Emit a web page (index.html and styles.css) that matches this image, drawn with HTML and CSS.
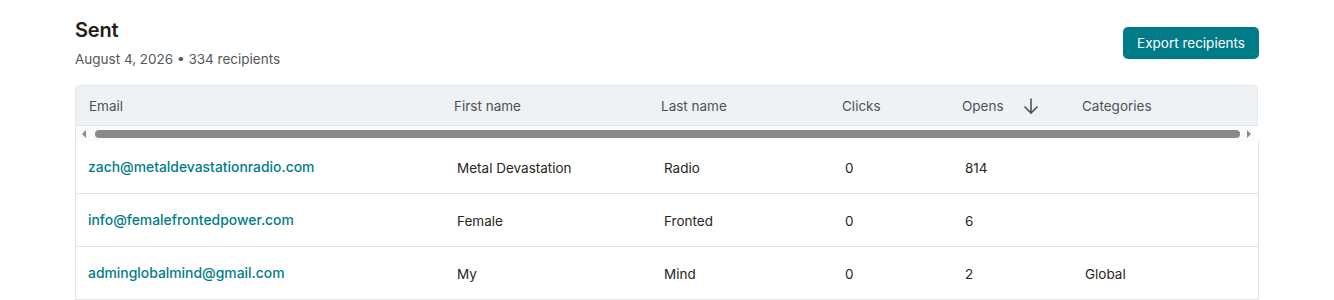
FILE: index.html
```html
<!DOCTYPE html>
<html>
<head>
<meta charset="utf-8">
<link rel="stylesheet" href="styles.css">
</head>
<body>
<div class="page">
  <div class="top">
    <div class="titles">
      <h1 class="title">Sent</h1>
      <div class="sub">August 4, 2026 • 334 recipients</div>
    </div>
    <button class="btn">Export recipients</button>
  </div>
  <div class="card">
    <div class="head row-grid">
      <div class="hc">Email</div>
      <div class="hc">First name</div>
      <div class="hc">Last name</div>
      <div class="hc">Clicks</div>
      <div class="hc opens">Opens
        <svg class="arrow" width="20" height="20" viewBox="0 0 20 20"><path d="M10 2.5V17M3.5 10.5L10 17l6.5-6.5" fill="none" stroke="#4d5358" stroke-width="1.6"/></svg>
      </div>
      <div class="hc">Categories</div>
    </div>
    <div class="scrollbar">
      <span class="tri left"></span>
      <div class="thumb"></div>
      <span class="tri right"></span>
    </div>
    <div class="body">
      <div class="row row-grid">
        <div class="c email">zach@metaldevastationradio.com</div>
        <div class="c">Metal Devastation</div>
        <div class="c">Radio</div>
        <div class="c">0</div>
        <div class="c">814</div>
        <div class="c"></div>
      </div>
      <div class="row row-grid">
        <div class="c email">info@femalefrontedpower.com</div>
        <div class="c">Female</div>
        <div class="c">Fronted</div>
        <div class="c">0</div>
        <div class="c">6</div>
        <div class="c"></div>
      </div>
      <div class="row row-grid">
        <div class="c email">adminglobalmind@gmail.com</div>
        <div class="c">My</div>
        <div class="c">Mind</div>
        <div class="c">0</div>
        <div class="c">2</div>
        <div class="c">Global</div>
      </div>
    </div>
  </div>
</div>
</body>
</html>
```

FILE: styles.css
```css
* { box-sizing: border-box; }
html, body { margin: 0; padding: 0; background: #fff; }
body {
  font-family: Inter, "Noto Sans", "Liberation Sans", sans-serif;
  color: #241c15;
}
.page {
  width: 1184px;
  margin: 0 auto;
  padding-top: 16px;
}
.top {
  display: flex;
  justify-content: space-between;
  align-items: center;
}
.title {
  margin: 0;
  font-size: 20px;
  line-height: 28px;
  font-weight: 600;
  color: #241c15;
  letter-spacing: -0.2px;
}
.sub {
  margin-top: 5px;
  font-size: 13.5px;
  line-height: 20px;
  color: #52575c;
}
.btn {
  font-family: inherit;
  background: #007c89;
  color: #fff;
  border: none;
  border-radius: 5px;
  height: 32px;
  width: 136px;
  font-size: 13.5px;
  padding: 0;
  margin-top: 1px;
}
.card {
  margin-top: 16px;
  width: 1184px;
}
.row-grid {
  display: grid;
  grid-template-columns: 365px 207px 181px 120px 120px 1fr;
}
.head {
  height: 41px;
  background: #eff2f5;
  border: 1px solid #e4e8eb;
  border-bottom-color: #e1e5e8;
  border-radius: 5px 5px 0 0;
  align-items: center;
  width: 1183px;
}
.hc {
  padding-left: 13px;
  font-size: 13.5px;
  color: #4d5358;
  display: flex;
  align-items: center;
}
.opens .arrow { margin-left: 17px; }
.scrollbar {
  height: 15px;
  display: flex;
  align-items: center;
  background: #fbfbfb;
  padding: 0 4px 0 6px;
  width: 1180px;
  border-left: 1px solid #e4e8eb;
}
.thumb {
  flex: 1;
  height: 8px;
  border-radius: 4px;
  background: #8a8a8a;
  margin: 0 7px 0 9px;
}
.tri {
  width: 0; height: 0;
  border-top: 4px solid transparent;
  border-bottom: 4px solid transparent;
}
.tri.left { border-right: 4px solid #8a8a8a; }
.tri.right { border-left: 4px solid #8a8a8a; }
.body {
  width: 1184px;
  border-left: 1px solid #e1e5e8;
  border-right: 1px solid #e1e5e8;
}
.row {
  height: 53px;
  border-bottom: 1px solid #e1e5e8;
  align-items: center;
}
.c {
  padding-left: 16px;
  font-size: 13.5px;
  color: #2b2520;
  padding-top: 2px;
}
.c.email {
  padding-left: 12px;
  padding-top: 0;
  color: #007c89;
  font-weight: 500;
  font-size: 13.9px;
}
```
